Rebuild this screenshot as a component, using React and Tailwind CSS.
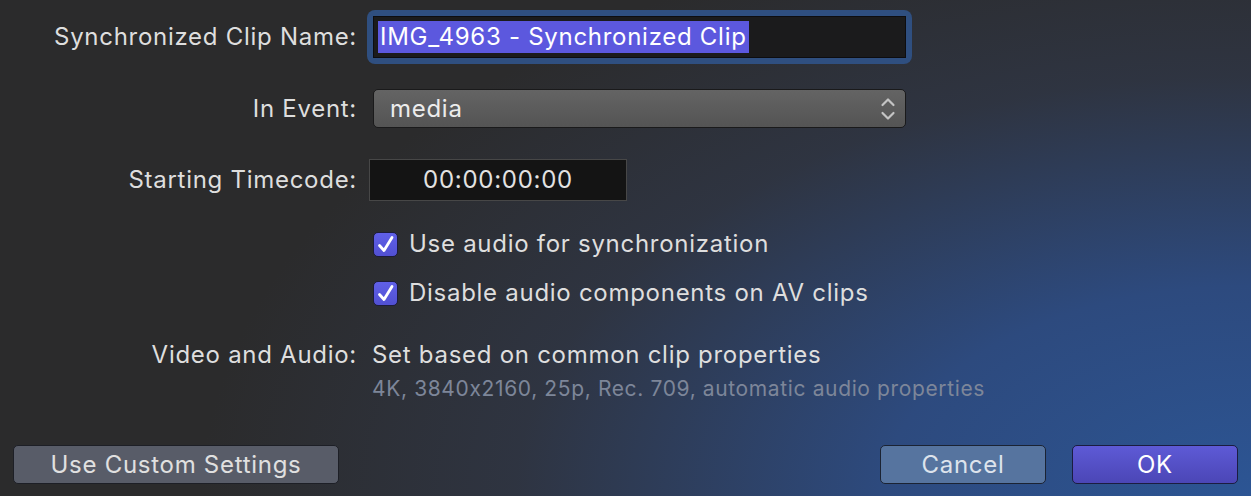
const Label = ({ children }) => (
	<div className="w-[357px] shrink-0 text-right text-[24px] tracking-[0.03em] text-[#dedede]">{children}</div>
);

const Checkbox = ({ label }) => (
	<label className="flex items-center h-[30px] ml-[373px]">
		<span className="w-[25px] h-[25px] rounded-[5px] border border-[#1d1c3c] bg-gradient-to-b from-[#6060e8] to-[#5150d2] flex items-center justify-center">
			<svg width="23" height="23" viewBox="0 0 23 23" fill="none">
				<path d="M5.5 12.5 L10 17.5 L18 4.5" stroke="white" strokeWidth="2.8" strokeLinecap="round" strokeLinejoin="round" />
			</svg>
		</span>
		<span className="ml-[11px] text-[24px] tracking-[0.03em] text-[#dedede]">{label}</span>
	</label>
);

const App = () => {
	return (
		<div
			className="w-[1251px] h-[496px] overflow-hidden bg-[#2b2b2c] bg-[radial-gradient(ellipse_1050px_600px_at_100%_100%,#2c5594_0%,#2d4a7e_35%,rgba(48,56,74,0.7)_70%,transparent_100%)] leading-none [font-feature-settings:'calt'_0]"
			style={{ fontFamily: 'Inter, "Noto Sans", sans-serif' }}
		>
			{/* Clip name */}
			<div className="flex items-center h-[54px] mt-[10px]">
				<Label>Synchronized Clip Name:</Label>
				<div className="ml-[10px] w-[545px] h-[54px] rounded-[8px] bg-[#2f4f80] p-[6px]">
					<div className="h-full bg-[#1b1b1c] border border-[#0d0d10] flex items-center px-[4px]">
						<span className="bg-[#5c58de] text-white text-[24px] tracking-[0.03em] h-[32px] flex items-center pl-[2px] pr-[2px]">
							IMG_4963 - Synchronized Clip
						</span>
					</div>
				</div>
			</div>

			{/* Event */}
			<div className="flex items-center h-[39px] mt-[25px]">
				<Label>In Event:</Label>
				<div className="ml-[16px] w-[533px] h-[39px] rounded-[5px] border border-[#1a1a1b] bg-gradient-to-b from-[#646464] to-[#545454] flex items-center justify-between pl-[16px] pr-[9px]">
					<span className="text-[24px] tracking-[0.03em] text-[#ececec]">media</span>
					<svg width="16" height="26" viewBox="0 0 16 26" fill="none">
						<path d="M2.5 9 L8 3.5 L13.5 9" stroke="#c4c4c4" strokeWidth="2.2" strokeLinecap="round" strokeLinejoin="round" />
						<path d="M2.5 17 L8 22.5 L13.5 17" stroke="#c4c4c4" strokeWidth="2.2" strokeLinecap="round" strokeLinejoin="round" />
					</svg>
				</div>
			</div>

			{/* Timecode */}
			<div className="flex items-center h-[42px] mt-[31px]">
				<Label>Starting Timecode:</Label>
				<div className="ml-[12px] w-[258px] h-[42px] bg-[#141414] border border-[#474747] flex items-center justify-center text-[24px] tracking-[0.03em] text-[#e2e2e2]">
					00:00:00:00
				</div>
			</div>

			<div className="mt-[28px]">
				<Checkbox label="Use audio for synchronization" />
			</div>
			<div className="mt-[19px]">
				<Checkbox label="Disable audio components on AV clips" />
			</div>

			{/* Video and Audio */}
			<div className="flex items-center h-[30px] mt-[32px]">
				<Label>Video and Audio:</Label>
				<div className="ml-[15px] text-[24px] tracking-[0.03em] text-[#dedede]">Set based on common clip properties</div>
			</div>
			<div className="ml-[372px] mt-[7px] h-[22px] flex items-center text-[21px] tracking-[0.03em] text-[#7d8699]">
				4K, 3840x2160, 25p, Rec. 709, automatic audio properties
			</div>

			{/* Buttons */}
			<div className="flex items-center mt-[46px] px-[13px]">
				<button className="w-[326px] h-[39px] rounded-[5px] border border-[#1d1f26] bg-[#585c68] text-[24px] tracking-[0.03em] text-[#e0e0e0]">
					Use Custom Settings
				</button>
				<div className="flex-1" />
				<button className="w-[166px] h-[39px] rounded-[5px] border border-[#1b2333] bg-[#56749f] text-[24px] tracking-[0.03em] text-[#dde3ec]">
					Cancel
				</button>
				<button className="ml-[26px] w-[166px] h-[39px] rounded-[5px] border border-[#1b1d40] bg-gradient-to-b from-[#5e5ad6] to-[#4b46b6] text-[24px] tracking-[0.03em] text-white">
					OK
				</button>
			</div>
		</div>
	);
};

export default App;
